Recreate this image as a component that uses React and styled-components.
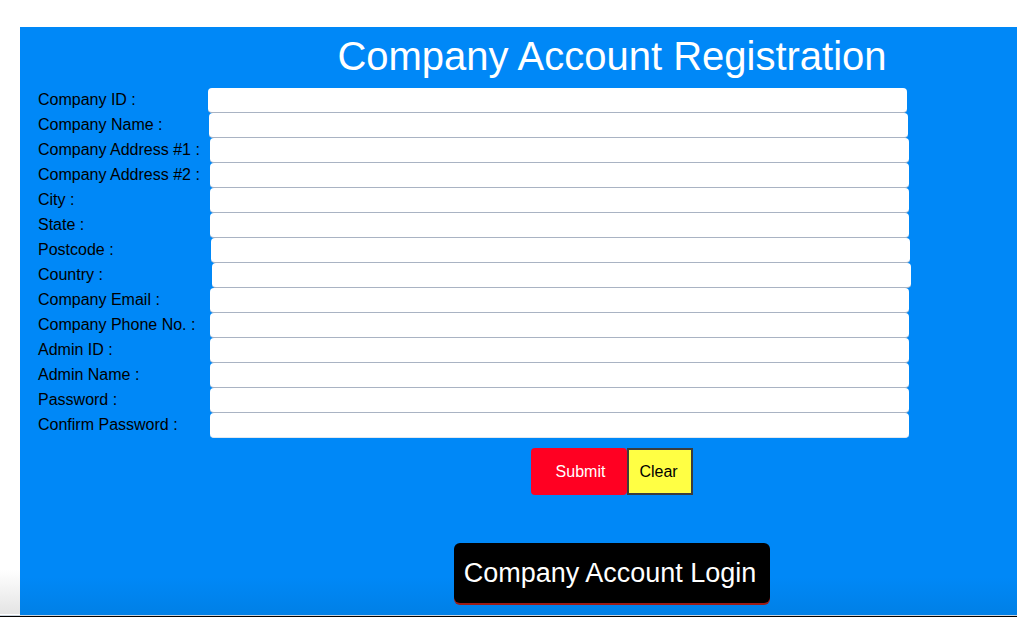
import React from "react";
import styled, { createGlobalStyle } from "styled-components";

const Global = createGlobalStyle`
  html, body {
    margin: 0;
    padding: 0;
    overflow: hidden;
    height: 617px;
  }
  html {
    background: linear-gradient(to bottom, #ffffff 0px, #ffffff 570px, #e4e4e4 614px, #ffffff 614px);
  }
  body {
    font-family: "Liberation Sans", Arial, sans-serif;
  }
`;

const Page = styled.div`
  padding: 27px 0 0 20px;
  width: 1017px;
  box-sizing: border-box;
  overflow: hidden;
`;

const Panel = styled.main`
  width: 1184px;
  height: 588px;
  box-sizing: border-box;
  background: linear-gradient(to bottom, #0088f7 0px, #0088f7 550px, #0080e6 588px);
  display: flex;
  flex-direction: column;
  align-items: center;
  padding-top: 6px;
`;

const Title = styled.h1`
  margin: 0;
  font-size: 40px;
  line-height: 46px;
  font-weight: normal;
  color: #ffffff;
`;

const Form = styled.form`
  align-self: stretch;
  display: flex;
  flex-direction: column;
  align-items: center;
  margin-top: 9px;
`;

const Fields = styled.div`
  align-self: flex-start;
  display: grid;
  grid-template-columns: 170px 699px;
  grid-auto-rows: 25px;
  padding-left: 18px;
`;

const Label = styled.label`
  font-size: 16px;
  line-height: 23px;
  color: #000000;
  white-space: nowrap;
`;

const Input = styled.input`
  box-sizing: border-box;
  width: 699px;
  height: 25px;
  margin: 0 0 0 ${(p) => p.$shift}px;
  padding: 0 6px;
  border: none;
  border-bottom: 1px solid #a9b3c3;
  border-radius: 4px;
  background: #ffffff;
  font-family: "Liberation Sans", Arial, sans-serif;
  font-size: 14px;
  outline: none;
  ${(p) => (p.$last ? "border-bottom-color: #e2e8f0;" : "")}
`;

const Actions = styled.div`
  display: flex;
  margin-top: 10px;
`;

const SubmitButton = styled.button`
  box-sizing: border-box;
  height: 47px;
  width: 96px;
  border: none;
  border-radius: 4px;
  background: #ff0022;
  color: #ffffff;
  font-family: "Liberation Sans", Arial, sans-serif;
  font-size: 16px;
  padding: 0 0 0 3px;
  cursor: pointer;
`;

const ClearButton = styled.button`
  box-sizing: border-box;
  height: 47px;
  width: 66px;
  border: 2px solid #3c3c3c;
  border-radius: 0;
  background: #ffff44;
  color: #000000;
  font-family: "Liberation Sans", Arial, sans-serif;
  font-size: 16px;
  padding: 0 3px 0 0;
  cursor: pointer;
`;

const LoginButton = styled.button`
  box-sizing: border-box;
  margin-top: 48px;
  width: 316px;
  height: 60px;
  border: none;
  border-radius: 6px;
  background: #000000;
  box-shadow: 0 2px 0 #9c1c16;
  color: #ffffff;
  font-family: "Liberation Sans", Arial, sans-serif;
  font-size: 27px;
  padding: 0 4px 0 0;
  cursor: pointer;
`;

const BottomRule = styled.div`
  height: 1px;
  margin-left: -20px;
  width: 1017px;
  background: #c9d3dd;
  border-bottom: 1px solid #000000;
`;

const fields = [
  ["Company ID :", 0],
  ["Company Name :", 1],
  ["Company Address #1 :", 2],
  ["Company Address #2 :", 2],
  ["City :", 2],
  ["State :", 2],
  ["Postcode :", 3],
  ["Country :", 4],
  ["Company Email :", 2],
  ["Company Phone No. :", 2],
  ["Admin ID :", 2],
  ["Admin Name :", 2],
  ["Password :", 2],
  ["Confirm Password :", 2],
];

export default function App() {
  return (
    <>
      <Global />
      <Page>
        <Panel>
          <Title>Company Account Registration</Title>
          <Form onSubmit={(e) => e.preventDefault()}>
            <Fields>
              {fields.map(([label, shift], i) => (
                <React.Fragment key={label}>
                  <Label htmlFor={`f${i}`}>{label}</Label>
                  <Input
                    id={`f${i}`}
                    type={label.startsWith("Password") || label.startsWith("Confirm") ? "password" : "text"}
                    $shift={shift}
                    $last={i === fields.length - 1}
                  />
                </React.Fragment>
              ))}
            </Fields>
            <Actions>
              <SubmitButton type="submit">Submit</SubmitButton>
              <ClearButton type="reset">Clear</ClearButton>
            </Actions>
            <LoginButton type="button">Company Account Login</LoginButton>
          </Form>
        </Panel>
        <BottomRule />
      </Page>
    </>
  );
}
